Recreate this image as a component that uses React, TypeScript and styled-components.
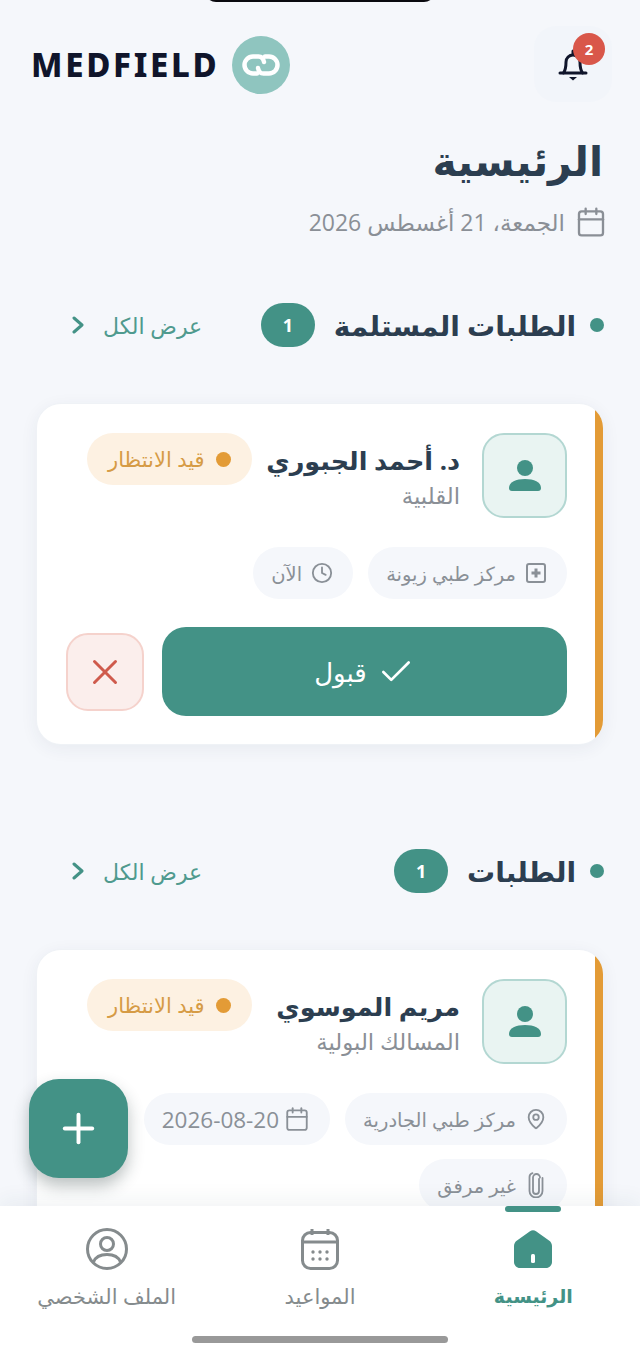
import React from "react";
import styled, { createGlobalStyle } from "styled-components";
import { Calendar, Check, Clock, MapPin, Plus, X } from "lucide-react";

const GlobalStyle = createGlobalStyle`
  html, body { margin: 0; padding: 0; background: #f5f7fb; }
  * { box-sizing: border-box; }
`;

const teal = "#439286";
const orange = "#e39b36";
// Open Sans has no Arabic: it only takes the digits, the rest falls through to the fallback
const arabic = `"Open Sans", "DejaVu Sans", sans-serif`;

const Screen = styled.div`
  position: relative;
  width: 640px;
  height: 1356px;
  overflow: hidden;
  display: flex;
  flex-direction: column;
  background: #f5f7fb;
  font-family: ${arabic};
`;

const Notch = styled.div`
  position: absolute;
  top: -20px;
  left: 205px;
  width: 230px;
  height: 22px;
  background: #0a0a0f;
  border-radius: 14px;
`;

const Scroll = styled.main`
  flex: 1;
  min-height: 0;
  overflow: hidden;
  padding: 26px 37px 0;
`;

const Header = styled.header`
  display: flex;
  align-items: center;
  justify-content: space-between;
  margin: 0 -9px 0 -6px;
`;

const Brand = styled.div`
  display: flex;
  align-items: center;
  gap: 13px;
`;

const BrandName = styled.span`
  font-family: "Noto Sans", sans-serif;
  font-weight: 800;
  font-size: 33px;
  letter-spacing: 2.700px;
  color: #10152b;
`;

const BrandMark = styled.div`
  width: 58px;
  height: 58px;
  margin-top: 2px;
  border-radius: 50%;
  background: #8fc5bf;
  display: flex;
  align-items: center;
  justify-content: center;
`;

const BellButton = styled.div`
  position: relative;
  width: 78px;
  height: 76px;
  border-radius: 22px;
  background: #f2f5fa;
  display: flex;
  align-items: center;
  justify-content: center;
`;

const BellBadge = styled.span`
  position: absolute;
  top: 7px;
  right: 7px;
  width: 32px;
  height: 32px;
  border-radius: 50%;
  background: #d9574a;
  color: #fff;
  font: 700 15px "Noto Sans", sans-serif;
  display: flex;
  align-items: center;
  justify-content: center;
`;

const Title = styled.h1`
  margin: 25px 0 0;
  direction: rtl;
  font-size: 41px;
  line-height: 66px;
  font-weight: 700;
  color: #2c3e50;
`;

const DateRow = styled.div`
  direction: rtl;
  display: flex;
  align-items: center;
  gap: 10px;
  height: 28px;
  margin-top: 15px;
  font-size: 23px;
  color: #8a8f96;

  svg {
    margin-right: -4px;
  }
`;

const SectionHead = styled.div<{ $top: number }>`
  direction: rtl;
  display: flex;
  align-items: center;
  justify-content: space-between;
  height: 44px;
  margin: ${(p) => p.$top}px -1px 0 0;
  padding-left: 35px;
`;

const SectionTitle = styled.div`
  display: flex;
  align-items: center;
`;

const Dot = styled.span<{ $size: number; $color: string }>`
  width: ${(p) => p.$size}px;
  height: ${(p) => p.$size}px;
  border-radius: 50%;
  background: ${(p) => p.$color};
  flex: none;
`;

const SectionName = styled.h2`
  margin: 0 14px 0 19px;
  font-size: 28px;
  font-weight: 700;
  color: #2c3e50;
`;

const CountBadge = styled.span`
  width: 54px;
  height: 44px;
  border-radius: 22px;
  background: ${teal};
  color: #fff;
  font: 700 18px "Noto Sans", sans-serif;
  display: flex;
  align-items: center;
  justify-content: center;
`;

const ViewAll = styled.a`
  display: flex;
  align-items: center;
  gap: 19px;
  font-size: 22px;
  color: #4f9a8e;
`;

const Card = styled.article<{ $top: number }>`
  direction: rtl;
  margin-top: ${(p) => p.$top}px;
  background: linear-gradient(to left, ${orange} 8px, #fff 8px);
  border-radius: 24px;
  padding: 29px 36px 28px 29px;
  box-shadow: 0 0 0 1px #eff2f6, 0 4px 18px rgba(40, 60, 80, 0.07);
`;

const CardTop = styled.div`
  display: flex;
  gap: 22px;
`;

const Avatar = styled.div`
  width: 85px;
  height: 85px;
  flex: none;
  border-radius: 22px;
  background: #e9f4f2;
  border: 2px solid #b3d7d2;
  display: flex;
  align-items: center;
  justify-content: center;
`;

const NameBlock = styled.div`
  flex: 1;
  min-width: 0;
  display: flex;
  flex-direction: column;
  padding-top: 4px;
`;

const Name = styled.div`
  font-size: 25.500px;
  font-weight: 700;
  line-height: 46px;
  color: #2c3e50;
  white-space: nowrap;
`;

const Specialty = styled.div`
  font-size: 22.800px;
  line-height: 26px;
  color: #8a8f96;
  white-space: nowrap;
`;

const StatusPill = styled.div`
  flex: none;
  height: 52px;
  margin-left: 21px;
  padding: 0 21px;
  border-radius: 26px;
  background: #fdf1e2;
  color: #d69b45;
  font-size: 21px;
  display: flex;
  align-items: center;
  gap: 11px;
  white-space: nowrap;
`;

const Chips = styled.div`
  display: flex;
  flex-wrap: wrap;
  gap: 14px 15px;
  margin-top: 29px;
`;

const Chip = styled.div`
  height: 52px;
  padding: 0 20px 0 18px;
  border-radius: 26px;
  background: #f5f7fb;
  color: #8a9097;
  font-size: 19.500px;
  display: flex;
  align-items: center;
  gap: 9px;
  white-space: nowrap;
`;

const Digits = styled.span`
  font-size: 22.500px;
  margin-right: -4px;
`;

const Actions = styled.div`
  display: flex;
  align-items: center;
  gap: 18px;
  margin-top: 28px;
`;

const AcceptButton = styled.button`
  flex: 1;
  height: 89px;
  border: 0;
  border-radius: 24px;
  background: ${teal};
  color: #fff;
  font: 400 26px ${arabic};
  display: flex;
  align-items: center;
  justify-content: center;
  gap: 10px;
`;

const RejectButton = styled.button`
  width: 78px;
  height: 78px;
  flex: none;
  border-radius: 22px;
  border: 2px solid #f5d2cc;
  background: #fbeeec;
  color: #cf5a4c;
  display: flex;
  align-items: center;
  justify-content: center;
  padding: 0;
`;

const Fab = styled.button`
  position: absolute;
  left: 29px;
  top: 1079px;
  width: 99px;
  height: 99px;
  border: 0;
  border-radius: 30px;
  background: ${teal};
  color: #fff;
  box-shadow: 0 8px 16px rgba(30, 50, 50, 0.3);
  display: flex;
  align-items: center;
  justify-content: center;
`;

const BottomNav = styled.nav`
  position: relative;
  flex: none;
  height: 150px;
  background: #fff;
  box-shadow: 0 -6px 20px rgba(40, 60, 80, 0.06);
  direction: rtl;
  display: grid;
  grid-template-columns: repeat(3, 1fr);
`;

const NavItem = styled.div<{ $active?: boolean }>`
  position: relative;
  display: flex;
  flex-direction: column;
  align-items: center;
  padding-top: 21px;
  gap: 10px;
  font-size: ${(p) => (p.$active ? 19 : 21)}px;
  line-height: 30px;
  font-weight: ${(p) => (p.$active ? 700 : 400)};
  color: ${(p) => (p.$active ? teal : "#858b8d")};
`;

const NavIcon = styled.span`
  height: 44px;
  display: flex;
  align-items: center;
`;

const ActiveBar = styled.span`
  position: absolute;
  top: 0;
  width: 56px;
  height: 6px;
  border-radius: 3px;
  background: ${teal};
`;

const HomeIndicator = styled.div`
  position: absolute;
  left: 192px;
  bottom: 13px;
  width: 256px;
  height: 7px;
  border-radius: 4px;
  background: #999;
`;

const PersonIcon = () => (
  <svg width="32" height="32" viewBox="0 0 32 32" fill={teal}>
    <circle cx="16" cy="8" r="8" />
    <path d="M0 28c0-6 7-9 16-9s16 3 16 9c0 2-1 3-3 3H3c-2 0-3-1-3-3z" />
  </svg>
);

const LinkMark = () => (
  <svg width="38" height="24" viewBox="0 0 38 24" fill="none" stroke="#fff" strokeWidth="4.500" strokeLinecap="round">
    <path d="M15 20.500h-4a8.500 8.500 0 0 1 0-17h5.500c3.500 0 5 2.500 5.500 5.500" />
    <path d="M23 3.500h4a8.500 8.500 0 0 1 0 17h-5.500c-3.500 0-5-2.500-5.500-5.500" />
  </svg>
);

const BellIcon = () => (
  <svg width="30" height="34" viewBox="0 0 30 34" fill="none" stroke="#10152b" strokeWidth="3" strokeLinecap="round">
    <path d="M2 26h26" />
    <path d="M5.500 26c2-3 2.500-6 2.500-11a7 7 0 0 1 14 0c0 5 .5 8 2.500 11" />
    <path d="M15 4v3" />
    <path d="M11 30h8l-4 3.500z" fill="#10152b" stroke="none" />
  </svg>
);

const ChevronIcon = () => (
  <svg width="12" height="18" viewBox="0 0 12 18" fill="none" stroke={teal} strokeWidth="3" strokeLinecap="round" strokeLinejoin="round">
    <path d="M2 2l8 7-8 7" />
  </svg>
);

const ClinicIcon = () => (
  <svg width="22" height="22" viewBox="0 0 22 22" fill="none" stroke="#8a9097" strokeWidth="2">
    <rect x="2" y="2" width="18" height="18" rx="2" />
    <path d="M11 6.500v9M6.500 11h9" strokeWidth="3" />
  </svg>
);

const ClipIcon = () => (
  <svg width="22" height="26" viewBox="-3 0 22 26" fill="none" stroke="#8a9097" strokeWidth="1.800" strokeLinecap="round">
    <path d="M11 7v12a3 3 0 0 1-6 0V5.500a3.500 3.500 0 0 1 7 0" />
    <path d="M14.500 6v13a6.500 6.500 0 0 1-13 0V5a4 4 0 0 1 3-3.800" />
  </svg>
);

const HomeIcon = () => (
  <svg width="38" height="38" viewBox="0 0 38 38" fill={teal}>
    <path d="M16 1.200c1.800-1.300 4.200-1.300 6 0l13 9.300c1.900 1.300 3 3.300 3 5.500V32c0 3.300-2.700 6-6 6H6c-3.300 0-6-2.700-6-6V16c0-2.200 1.100-4.200 3-5.500z" />
    <rect x="17" y="24" width="4" height="9" rx="1.500" fill="#fff" />
  </svg>
);

const CalendarNavIcon = () => (
  <svg width="38" height="42" viewBox="0 0 38 42" fill="none" stroke="#858b8d" strokeWidth="3">
    <rect x="1.500" y="4.500" width="35" height="36" rx="8" />
    <path d="M2 14h34M11 1v6M27 1v6" />
    <g fill="#858b8d" stroke="none">
      <circle cx="12" cy="24" r="1.700" /><circle cx="19" cy="24" r="1.700" /><circle cx="26" cy="24" r="1.700" />
      <circle cx="12" cy="31" r="1.700" /><circle cx="19" cy="31" r="1.700" /><circle cx="26" cy="31" r="1.700" />
    </g>
  </svg>
);

const ProfileIcon = () => (
  <svg width="42" height="42" viewBox="0 0 42 42" fill="none" stroke="#858b8d" strokeWidth="3">
    <circle cx="21" cy="21" r="19.500" />
    <circle cx="21" cy="16" r="6.500" />
    <path d="M7.500 34c2-5 7-7.500 13.500-7.500S32.500 29 34.500 34" />
  </svg>
);

const App = () => (
  <Screen>
    <GlobalStyle />
    <Notch />
    <Scroll>
      <Header>
        <Brand>
          <BrandName>MEDFIELD</BrandName>
          <BrandMark><LinkMark /></BrandMark>
        </Brand>
        <BellButton>
          <BellIcon />
          <BellBadge>2</BellBadge>
        </BellButton>
      </Header>
      <Title>الرئيسية</Title>
      <DateRow>
        <Calendar size={32} strokeWidth={1.750} />
        <span>الجمعة، 21 أغسطس 2026</span>
      </DateRow>

      <SectionHead $top={67}>
        <SectionTitle>
          <Dot $size={14} $color={teal} />
          <SectionName>الطلبات المستلمة</SectionName>
          <CountBadge>1</CountBadge>
        </SectionTitle>
        <ViewAll>عرض الكل<ChevronIcon /></ViewAll>
      </SectionHead>

      <Card $top={57}>
        <CardTop>
          <Avatar><PersonIcon /></Avatar>
          <NameBlock>
            <Name>د. أحمد الجبوري</Name>
            <Specialty>القلبية</Specialty>
          </NameBlock>
          <StatusPill><Dot $size={15} $color={orange} />قيد الانتظار</StatusPill>
        </CardTop>
        <Chips>
          <Chip><ClinicIcon />مركز طبي زيونة</Chip>
          <Chip><Clock size={22} />الآن</Chip>
        </Chips>
        <Actions>
          <AcceptButton><Check size={38} strokeWidth={1.700} />قبول</AcceptButton>
          <RejectButton><X size={42} strokeWidth={1.700} /></RejectButton>
        </Actions>
      </Card>

      <SectionHead $top={105}>
        <SectionTitle>
          <Dot $size={14} $color={teal} />
          <SectionName>الطلبات</SectionName>
          <CountBadge>1</CountBadge>
        </SectionTitle>
        <ViewAll>عرض الكل<ChevronIcon /></ViewAll>
      </SectionHead>

      <Card $top={57}>
        <CardTop>
          <Avatar><PersonIcon /></Avatar>
          <NameBlock>
            <Name>مريم الموسوي</Name>
            <Specialty>المسالك البولية</Specialty>
          </NameBlock>
          <StatusPill><Dot $size={15} $color={orange} />قيد الانتظار</StatusPill>
        </CardTop>
        <Chips>
          <Chip><MapPin size={22} />مركز طبي الجادرية</Chip>
          <Chip><Calendar size={26} strokeWidth={1.700} /><Digits>2026-08-20</Digits></Chip>
          <Chip><ClipIcon />غير مرفق</Chip>
        </Chips>
      </Card>
    </Scroll>

    <Fab><Plus size={47} strokeWidth={2} /></Fab>

    <BottomNav>
      <NavItem $active>
        <ActiveBar />
        <NavIcon><HomeIcon /></NavIcon>
        الرئيسية
      </NavItem>
      <NavItem><NavIcon><CalendarNavIcon /></NavIcon>المواعيد</NavItem>
      <NavItem><NavIcon><ProfileIcon /></NavIcon>الملف الشخصي</NavItem>
      <HomeIndicator />
    </BottomNav>
  </Screen>
);

export default App;
